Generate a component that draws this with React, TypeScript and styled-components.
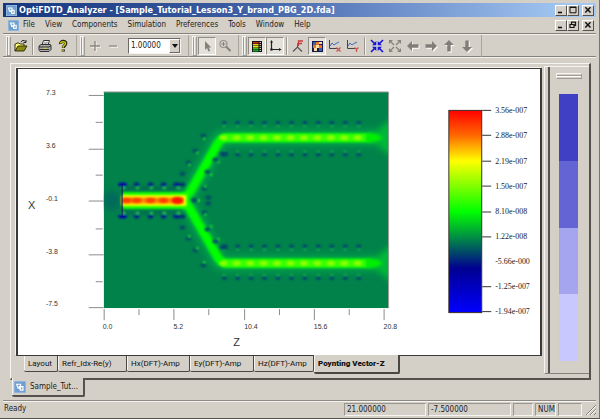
import React from "react";
import styled, { createGlobalStyle, css } from "styled-components";

const face = "#d4d0c8";
const shade = "#85827c";
const dark = "#3c3a38";
const ui = `"DejaVu Sans Condensed", "DejaVu Sans", sans-serif`;

const GlobalStyle = createGlobalStyle`
  *, *::before, *::after { box-sizing: border-box; }
  html, body, #root { height: 100%; margin: 0; }
  body { background: ${face}; font-family: ${ui}; font-size: 8px; line-height: 12px; color: #222; }
  button, input, select { font: inherit; color: inherit; margin: 0; padding: 0; border-radius: 0; }
  svg { display: block; }
`;

const Window = styled.div`
  display: flex;
  flex-direction: column;
  height: 100vh;
  padding: 3px 3px 1px;
  background: ${face};
  border-right: 1px solid #77746e;
  border-bottom: 1px solid #55524d;
`;

const TitleBar = styled.header`
  display: flex;
  align-items: center;
  height: 14px;
  flex: none;
  padding: 0 2px 0 3px;
  gap: 2px;
  background: linear-gradient(90deg, #16367e 0%, #3a5b9f 38%, #6d8fcb 66%, #a4c8f2 96%);
`;

const TitleText = styled.h1`
  flex: 1;
  margin: 0;
  font: bold 9px/14px ${ui};
  color: #fff;
  white-space: nowrap;
  overflow: hidden;
`;

const MenuBar = styled.nav`
  display: flex;
  align-items: center;
  height: 17px;
  flex: none;
  padding: 0 2px 0 5px;
  border-bottom: 1px solid ${shade};
`;

const MenuList = styled.div`
  display: flex;
  flex: 1;
  gap: 10px;
  padding-left: 4px;
`;

const MenuItem = styled.button`
  border: 0;
  background: none;
  line-height: 12px;
`;

const Captions = styled.div`
  display: flex;
`;

const CaptionButton = styled.button<{ $apart?: boolean }>`
  width: 12px;
  height: 11px;
  display: grid;
  place-items: center;
  background: ${face};
  border: 1px solid;
  border-color: #fff #55524d #55524d #fff;
  margin-left: ${(p) => (p.$apart ? "3px" : "0")};
`;

const ToolBar = styled.div`
  display: flex;
  align-items: center;
  height: 23px;
  flex: none;
  padding-left: 3px;
  border-top: 1px solid #f3f1ec;
  border-bottom: 1px solid ${shade};
`;

const Band = styled.div<{ $end: number }>`
  display: flex;
  align-items: center;
  height: 22px;
  padding-right: ${(p) => p.$end}px;
  border-right: 1px solid #aaa69e;
  margin-right: 3px;
`;

const Grip = styled.span`
  width: 5px;
  height: 20px;
  margin-right: 1px;
  border: 1px solid;
  border-color: #f6f4f0 #a19d95 #a19d95 #f6f4f0;
  background: linear-gradient(90deg, #a19d95 0 1px, #f6f4f0 1px 2px, ${face} 2px);
`;

const ToolButton = styled.button<{ $on?: boolean }>`
  width: 18px;
  height: 18px;
  display: grid;
  place-items: center;
  border: 1px solid transparent;
  background: none;
  ${(p) =>
    p.$on &&
    css`
      background: #e4e1db;
      border-color: #8f8c86 #fff #fff #8f8c86;
    `}
`;

const Divider = styled.span`
  width: 2px;
  height: 18px;
  margin: 0 2px;
  border-left: 1px solid #9b9790;
  border-right: 1px solid #f3f1ec;
`;

const Combo = styled.label`
  position: relative;
  display: flex;
  width: 53px;
  height: 16px;
  margin-left: 6px;
  border: 1px solid;
  border-color: #6c6964 #f6f4f0 #f6f4f0 #6c6964;
  background: #fff;
`;

const ComboSelect = styled.select`
  appearance: none;
  flex: 1;
  width: 100%;
  border: 0;
  padding-left: 2px;
  background: transparent;
  line-height: 14px;
`;

const ComboArrow = styled.span`
  position: absolute;
  right: 0;
  top: 0;
  bottom: 0;
  width: 11px;
  display: grid;
  place-items: center;
  background: ${face};
  border: 1px solid;
  border-color: #fff #6c6964 #6c6964 #fff;
  pointer-events: none;
`;

const Workspace = styled.main`
  display: flex;
  flex-direction: column;
  flex: 1;
  min-height: 0;
  padding: 6px 5px 0 7px;
  box-shadow: inset 0 1px #f3f1ec;
`;

const Frame = styled.section`
  display: flex;
  flex: 1;
  min-height: 0;
  border: 1px solid #f6f4f0;
  border-right: 2px solid #55524d;
  border-bottom: 2px solid #55524d;
`;

const PlotColumn = styled.div`
  display: flex;
  flex-direction: column;
  flex: 1;
  min-width: 0;
  padding: 4px 0 4px 5px;
`;

const PlotPane = styled.div`
  flex: 1;
  min-height: 0;
  background: #fff;
  border: 2px solid ${dark};
  border-top-width: 1px;
  border-bottom-width: 1px;
  box-shadow: -1px -1px #f6f4f0;
  & > svg { width: 100%; height: 100%; }
`;

const SheetTabs = styled.div`
  display: flex;
  align-items: flex-start;
  flex: none;
  height: 18px;
  padding-left: 8px;
`;

const SheetTab = styled.button<{ $w: number; $active?: boolean }>`
  width: ${(p) => p.$w}px;
  height: ${(p) => (p.$active ? "19px" : "16px")};
  margin-top: ${(p) => (p.$active ? "-1px" : "0")};
  padding-left: 4px;
  text-align: left;
  white-space: nowrap;
  font-family: Roboto, sans-serif;
  font-size: 8px;
  line-height: 14px;
  font-weight: ${(p) => (p.$active ? 900 : 400)};
  background: ${face};
  border: solid #4a4743;
  border-width: 0 1px 1px 0;
  border-right-width: ${(p) => (p.$active ? "2px" : "1px")};
  border-bottom-width: ${(p) => (p.$active ? "2px" : "1px")};
  border-radius: 0 0 2px 2px;
  box-shadow: inset 1px 0 #f6f4f0;
  color: #111;
`;

const Palette = styled.aside`
  display: flex;
  flex-direction: column;
  flex: none;
  width: 45px;
  margin: 2px 0 4px 2px;
  padding: 6px 7px 12px 8px;
  border-left: 1px solid #f6f4f0;
  box-shadow: inset 3px 0 ${face}, inset 5px 0 #55524d;
  border-top: 1px solid #f6f4f0;
  border-bottom: 1px solid #85827c;
`;

const PaletteGrip = styled.span`
  height: 6px;
  margin: 0 0 15px 3px;
  border: 1px solid;
  border-color: #f6f4f0 #a19d95 #a19d95 #f6f4f0;
  background: linear-gradient(${face} 0 1px, #a19d95 1px 2px, #fff 2px 3px, ${face} 3px);
`;

const Swatches = styled.div`
  display: flex;
  flex-direction: column;
  flex: 1;
  margin: 0 4px 0 6px;
`;

const Swatch = styled.span<{ $color: string }>`
  flex: 1;
  background: ${(p) => p.$color};
`;

const DocTabs = styled.div`
  display: flex;
  flex: none;
  height: 20px;
  padding-left: 2px;
`;

const DocTab = styled.button`
  display: flex;
  align-items: center;
  gap: 4px;
  width: 73px;
  height: 19px;
  margin-top: -2px;
  padding-left: 2px;
  background: ${face};
  border: solid #55524d;
  border-width: 0 2px 2px 0;
  border-radius: 0 0 2px 2px;
  box-shadow: inset 1px 0 #f6f4f0;
`;

const StatusBar = styled.footer`
  display: flex;
  align-items: center;
  flex: none;
  height: 17px;
  gap: 2px;
  padding: 1px 0 1px 1px;
  border-top: 1px solid #8d8a84;
  box-shadow: inset 0 1px #f6f4f0;
`;

const StatusText = styled.span`
  flex: 1;
`;

const StatusCell = styled.span<{ $w: number }>`
  width: ${(p) => p.$w}px;
  height: 13px;
  padding-left: 2px;
  line-height: 12px;
  border: 1px solid;
  border-color: #98958e #f6f4f0 #f6f4f0 #98958e;
`;

const AppIcon = ({ size = 11 }: { size?: number }) => (
  <svg width={size} height={size} viewBox="0 0 11 11" aria-hidden="true">
    <rect width="11" height="11" fill="#6f9fd0" />
    <rect width="11" height="11" fill="none" stroke="#a9c7e4" />
    <path d="M2.5 3h3.5v3.5H3.8zM5 5.2h3.2v3.2H5.8z" fill="none" stroke="#fff" strokeWidth="1.1" />
  </svg>
);

const Stroke = ({ d, w = 1.3, color = "#111" }: { d: string; w?: number; color?: string }) => (
  <svg width="8" height="8" viewBox="0 0 8 8" aria-hidden="true">
    <path d={d} fill="none" stroke={color} strokeWidth={w} />
  </svg>
);

const CaptionSet = ({ restore }: { restore?: boolean }) => (
  <Captions>
    <CaptionButton aria-label="Minimize"><Stroke d="M1 6.5h4" w={1.6} /></CaptionButton>
    <CaptionButton aria-label={restore ? "Restore" : "Maximize"}>
      {restore ? <Stroke d="M2.5 3V1h4v3.5H5M1 3.5h4v3H1zM1 3.5h4M2.5 1.2h4" w={1.2} /> : <Stroke d="M.8 1h6.4M1 .8v6h6v-6M1 1.5h6" w={1} />}
    </CaptionButton>
    <CaptionButton $apart aria-label="Close"><Stroke d="M1.3 1.2l5.2 5.4M6.5 1.2L1.3 6.6" w={1.4} /></CaptionButton>
  </Captions>
);

const Icon = ({ children }: { children: React.ReactNode }) => (
  <svg width="14" height="14" viewBox="0 0 14 14" fill="none" aria-hidden="true">{children}</svg>
);

const OpenIcon = () => (
  <Icon>
    <path d="M1 12V5h1l1-1h2l1 1h4v2" fill="#ffff70" stroke="#33330c" />
    <path d="M1 12l3-5h9l-3 5z" fill="#8b8b10" stroke="#33330c" />
    <path d="M7 3c1-2 3-2 4.500-.5M12 1v2.500H9.500" stroke="#222" />
  </Icon>
);
const PrintIcon = () => (
  <Icon>
    <path d="M4 6l1.500-4.500h6L10 6z" fill="#fff" stroke="#333" />
    <path d="M6 3.300h4M5.500 4.700h4" stroke="#777" strokeWidth=".7" />
    <path d="M1 7l2-1.500h9.500L13 7v3.500L11 12.500H2L1 11z" fill="#aaa" stroke="#333" />
    <path d="M1 8h10l2-1.500M2 10.500h9" stroke="#333" />
    <path d="M6 9.300h2.500" stroke="#e2dd20" />
  </Icon>
);
const HelpIcon = () => (
  <Icon>
    <path d="M4.500 5C4.200 1.800 10 1.500 9.800 4.500 9.700 6.500 7.300 6.500 7.300 9M7.300 10.500v2" stroke="#26260a" strokeWidth="3.200" />
    <path d="M4.500 4.500C4.500 2.200 9.600 2 9.500 4.500 9.400 6.300 7 6.500 7 8.700M7 10.700v1.300" stroke="#d0cc10" strokeWidth="1.400" />
  </Icon>
);
const PlusIcon = () => <Icon><path d="M8 3v10M3 8h10" stroke="#fff" /><path d="M7 2v10M2 7h10" stroke="#8a8781" strokeWidth="1.300" /></Icon>;
const MinusIcon = () => <Icon><path d="M4 8h8" stroke="#fff" /><path d="M3 7h8" stroke="#8a8781" strokeWidth="1.300" /></Icon>;
const CursorIcon = () => (
  <Icon><path d="M5 2v9l2-2 1.500 3.500 1.700-.8L8.700 8.500h2.600z" fill="#85827c" /></Icon>
);
const ZoomIcon = () => (
  <Icon>
    <circle cx="5.500" cy="5" r="3.500" stroke="#96938d" strokeWidth="1.200" />
    <path d="M5.500 3v4M3.500 5h4" stroke="#85827c" />
    <path d="M8 7.500l4.500 4.500" stroke="#85827c" strokeWidth="2" />
  </Icon>
);
const ColorBarIcon = () => (
  <Icon>
    <rect x="2" y="2" width="10" height="11" fill="#111" />
    {["#e02010", "#e8d010", "#d9ee10", "#30c020", "#10a830"].map((c, i) => <rect key={c} x="3" y={3 + i * 2} width="5.500" height="1.500" fill={c} />)}
    <path d="M9.500 3.500H11M9.500 5.500H11M9.500 7.500H11M9.500 9.500H11M9.500 11.500H11" stroke="#eee" strokeWidth=".8" />
  </Icon>
);
const AxesIcon = () => (
  <Icon>
    <path d="M3.500 3v7.500H12" stroke="#222" strokeWidth="1.200" />
    <path d="M3.500 1L5 3.500H2zM13.500 10.500l-2.500-1.500v3z" fill="#222" />
    <circle cx="3.500" cy="10.500" r="1.300" fill="#222" />
  </Icon>
);
const PointerFlagIcon = () => (
  <Icon>
    <path d="M1 12.500L5.500 8 10 12.500M5.500 8L6 4" stroke="#555" strokeWidth="1.200" />
    <path d="M6.500 7V2H11M6.500 4.500H10" stroke="#c83a3a" strokeWidth="1.300" />
  </Icon>
);
const FieldIcon = () => (
  <Icon>
    <rect x="2" y="2" width="11" height="11" fill="#17184c" />
    <path d="M3 3h3v3H3zM9 9h3v3H9z" fill="#3f62af" />
    <path d="M6 3h3v3H6zM3 6h3v3H3zM9 6h3v3H9z" fill="#e9762b" />
    <path d="M9 3h3v2H9zM6 6h3v3H6zM4 9h3v3H4z" fill="#ffe0a0" />
  </Icon>
);
const CutIcon = ({ y }: { y?: boolean }) => (
  <Icon>
    <path d="M1.500 1v8.500H10" stroke="#444" />
    <path d="M2 7l2-3 2 2 2-1.500L11 3" stroke="#4668b8" />
    <path d={y ? "M8.500 8.500l2 2 2-2M10.500 10.500V13" : "M8.500 8.500l4 4M12.500 8.500l-4 4"} stroke="#cf5050" strokeWidth="1.200" />
  </Icon>
);
const ShrinkIcon = () => (
  <Icon>
    <path d="M1 1l4.500 4.500M13 1L8.500 5.500M1 13l4.500-4.500M13 13L8.500 8.500" stroke="#1414d8" strokeWidth="1.600" />
    <path d="M6.300 2v4.300H2zM7.700 2v4.300H12zM6.300 12V7.700H2zM7.700 12V7.700H12z" fill="#1414d8" />
  </Icon>
);
const ExpandIcon = () => (
  <Icon>
    <path d="M3 3l3 3M11 3L8 6M3 11l3-3M11 11L8 8" stroke="#85827c" strokeWidth="1.300" />
    <path d="M1 1h4L1 5zM13 1H9l4 4zM1 13h4L1 9zM13 13H9l4-4z" fill="#85827c" />
  </Icon>
);
const ArrowIcon = ({ turn }: { turn: number }) => (
  <Icon>
    <path d="M1 7l5-5v3.300h6.500v3.400H6V12z" transform={`translate(1 1) rotate(${turn} 7 7)`} fill="#fff" />
    <path d="M1 7l5-5v3.300h6.500v3.400H6V12z" transform={`rotate(${turn} 7 7)`} fill="#817e78" />
  </Icon>
);

/* Chart geometry: the field spans x 86..372 and y 22..239, mirrored about the axis of the input guide. */
const AXIS = 131;
const mirror = (y: number) => 2 * AXIS - y;
const series = (from: number, step: number, n: number) => Array.from({ length: n }, (_, i) => from + step * i);

const armX = series(207, 13.5, 11);
const inputX = [105, 119, 133, 146, 160];
const sideDots: [number, number, boolean][] = [
  [186, 66, false], [187, 69, true], [178, 81, false], [180, 83, true], [171, 93, false], [172, 95, true], [165, 104, false],
  [205, 84, false], [201, 92, true], [198, 90, false], [194, 105, true], [190, 102, false], [187, 119, false], [188, 117, true],
  [208, 84, false], [181, 131, true], [177, 131, false], [191, 134, false],
];

const scaleRows: [string, number, boolean][] = [
  ["3.56e-007", 41, true], ["2.88e-007", 66, true], ["2.19e-007", 92, true], ["1.50e-007", 117, true], ["8.10e-008", 143, true],
  ["1.22e-008", 168, true], ["-5.66e-000", 193, false], ["-1.25e-007", 218, true], ["-1.94e-007", 243, true],
];

const Arm = ({ flip }: { flip?: boolean }) => (
  <g transform={flip ? `translate(0 ${2 * AXIS}) scale(1 -1)` : undefined}>
    <path d="M168 131L202 70Q204 68 210 68H358" stroke="#00a04a" strokeWidth="17" fill="none" filter="url(#soft3)" />
    <path d="M169 129L201 73Q204 68 210 68H356" stroke="#00ff00" strokeWidth="9" fill="none" filter="url(#soft2)" />
    <path d="M205 68H350" stroke="#38ff00" strokeWidth="7" filter="url(#soft1)" />
    {armX.map((x) => <ellipse key={x} cx={x - 1} cy="68" rx="4" ry="2.500" fill="#8cff00" filter="url(#soft1)" />)}
    <path d="M350 68L380 46V90z" fill="#00b838" filter="url(#soft3)" />
    <path d="M350 64H360L366 68 360 72H350z" fill="#00f000" filter="url(#soft2)" />
    {armX.map((x) => (
      <g key={x} filter="url(#soft1)">
        <ellipse cx={x} cy="53" rx="2.500" ry="1.500" fill="#003a78" />
        <ellipse cx={x} cy="56.500" rx="2" ry="1" fill="#1caa48" />
        <ellipse cx={x} cy="85" rx="2.500" ry="1.500" fill="#003a78" />
        <ellipse cx={x} cy="81.500" rx="2" ry="1" fill="#1caa48" />
      </g>
    ))}
    {sideDots.map(([x, y, lit]) => (
      <ellipse key={`${x}-${y}`} cx={x} cy={y} rx={lit ? 1.5 : 2.8} ry={lit ? 1.3 : 2} fill={lit ? "#20e030" : "#004868"} filter="url(#soft1)" />
    ))}
  </g>
);

const FieldChart = () => (
  <svg viewBox="0 0 524 285" role="img" aria-label="Poynting Vector-Z field distribution">
    <defs>
      <clipPath id="field"><rect x="86" y="22" width="286" height="217" /></clipPath>
      {[1, 1.7, 3].map((s, i) => (
        <filter key={s} id={`soft${i + 1}`} filterUnits="userSpaceOnUse" x="60" y="0" width="340" height="270"><feGaussianBlur stdDeviation={s} /></filter>
      ))}
      <linearGradient id="scale" x2="0" y2="1">
        <stop offset="0" stopColor="#ff0000" />
        <stop offset=".12" stopColor="#ff6400" />
        <stop offset=".25" stopColor="#ffff00" />
        <stop offset=".5" stopColor="#00ff00" />
        <stop offset=".64" stopColor="#00824a" />
        <stop offset=".78" stopColor="#000090" />
        <stop offset="1" stopColor="#0000ff" />
      </linearGradient>
    </defs>

    <g clipPath="url(#field)">
      <rect x="86" y="22" width="286" height="217" fill="#00824a" />
      <ellipse cx="94" cy="131" rx="9" ry="10" fill="#006a5c" filter="url(#soft3)" />
      <path d="M104 119H168M104 143H168" stroke="#007050" strokeWidth="5" filter="url(#soft2)" />
      <Arm />
      <Arm flip />
      <path d="M105 131H172" stroke="#10ff00" strokeWidth="17" filter="url(#soft1)" />
      <path d="M104 131H169" stroke="#f4ff00" strokeWidth="11" filter="url(#soft1)" />
      <path d="M104 131H166" stroke="#ff8a00" strokeWidth="6" filter="url(#soft1)" />
      {[109, 119, 133, 146, 160].map((x, i) => (
        <ellipse key={x} cx={x} cy="131" rx={i === 4 ? 6 : 5} ry={i === 4 ? 3.5 : 2.5} fill={i === 4 ? "#ff1800" : "#ff3c00"} filter="url(#soft1)" />
      ))}
      {[115, mirror(115)].map((y) => (
        <g key={y} filter="url(#soft1)">
          {inputX.map((x, i) => (
            <ellipse key={x} cx={x} cy={y} rx={i === 0 || i === 4 ? 4.5 : 2.8} ry="2" fill={i === 0 ? "#0000b4" : "#001c90"} />
          ))}
          <ellipse cx="165" cy={y} rx="3" ry="2" fill="#003070" />
          {inputX.map((x) => (
            <ellipse key={x} cx={x + 1} cy={y < AXIS ? y + 3.5 : y - 3.5} rx="2" ry="1.200" fill="#30d040" />
          ))}
        </g>
      ))}
      <path d="M104.500 115V147" stroke="#101060" />
    </g>
    <path d="M86 22H372V239" stroke="#9a9a9a" fill="none" />

    <g stroke="#8c8c8c">
      {[25.5, 79.5, 131.5, 185.5, 238.5].map((y) => <path key={y} d={`M71 ${y}h15`} />)}
      {[52.5, 105.5, 159.5, 212.5].map((y) => <path key={y} d={`M78 ${y}h7`} />)}
      {[86.5, 156.5, 227.5, 297.5, 367.5].map((x) => <path key={x} d={`M${x} 240v11`} />)}
      {[121.5, 191.5, 262.5, 332.5].map((x) => <path key={x} d={`M${x} 240v6`} />)}
    </g>
    <g fontFamily="Liberation Sans, Arial, sans-serif" fontSize="7" fill="#333">
      {([["7.3", 25], ["3.6", 78], ["-0.1", 131], ["-3.8", 185], ["-7.5", 237]] as [string, number][]).map(([t, y]) => <text key={t} x="28" y={y}>{t}</text>)}
      {([["0.0", 85], ["5.2", 156], ["10.4", 227], ["15.6", 297], ["20.8", 367]] as [string, number][]).map(([t, x]) => <text key={t} x={x} y="260">{t}</text>)}
      <text x="10" y="140" fontSize="11">X</text>
      <text x="216" y="277" fontSize="11">Z</text>
    </g>

    <rect x="432.500" y="40.500" width="33" height="203" fill="url(#scale)" stroke="#3a3028" />
    <g fontFamily="Liberation Serif, Times New Roman, serif" fontSize="8" fill="#222">
      {scaleRows.map(([t, y, tick]) => (
        <g key={t}>
          {tick && <path d={`M466 ${y - 0.5}h9`} stroke="#333" />}
          <text x="479" y={y + 2}>{t}</text>
        </g>
      ))}
    </g>
  </svg>
);

const menus = ["File", "View", "Components", "Simulation", "Preferences", "Tools", "Window", "Help"];
const sheets: [string, number][] = [
  ["Layout", 34], ["Refr_Idx-Re(y)", 69], ["Hx(DFT)-Amp", 63], ["Ey(DFT)-Amp", 64], ["Hz(DFT)-Amp", 60], ["Poynting Vector-Z", 86],
];

export default function App() {
  return (
    <>
      <GlobalStyle />
      <Window>
        <TitleBar>
          <AppIcon />
          <TitleText>OptiFDTD_Analyzer - [Sample_Tutorial_Lesson3_Y_brand_PBG_2D.fda]</TitleText>
          <CaptionSet />
        </TitleBar>
        <MenuBar>
          <AppIcon />
          <MenuList>{menus.map((m) => <MenuItem key={m}>{m}</MenuItem>)}</MenuList>
          <CaptionSet restore />
        </MenuBar>
        <ToolBar role="toolbar">
          <Band $end={4}>
            <Grip />
            <ToolButton aria-label="Open"><OpenIcon /></ToolButton>
            <Divider />
            <ToolButton aria-label="Print"><PrintIcon /></ToolButton>
            <ToolButton aria-label="Help"><HelpIcon /></ToolButton>
          </Band>
          <Band $end={7}>
            <Grip />
            <ToolButton aria-label="Increase"><PlusIcon /></ToolButton>
            <ToolButton aria-label="Decrease"><MinusIcon /></ToolButton>
            <Combo>
              <ComboSelect aria-label="Scale" defaultValue="1.00000"><option>1.00000</option></ComboSelect>
              <ComboArrow><svg width="6" height="4" viewBox="0 0 6 4"><path d="M0 0h6L3 4z" fill="#111" /></svg></ComboArrow>
            </Combo>
          </Band>
          <Band $end={4}>
            <Grip />
            <ToolButton $on aria-label="Select"><CursorIcon /></ToolButton>
            <ToolButton aria-label="Zoom"><ZoomIcon /></ToolButton>
          </Band>
          <Band $end={5}>
            <Grip />
            <ToolButton $on aria-label="Color bar"><ColorBarIcon /></ToolButton>
            <ToolButton $on aria-label="Axes"><AxesIcon /></ToolButton>
            <Divider />
            <ToolButton aria-label="Pointer flag"><PointerFlagIcon /></ToolButton>
            <ToolButton $on aria-label="Image map"><FieldIcon /></ToolButton>
            <ToolButton aria-label="X cut"><CutIcon /></ToolButton>
            <ToolButton aria-label="Y cut"><CutIcon y /></ToolButton>
            <Divider />
            <ToolButton aria-label="Shrink"><ShrinkIcon /></ToolButton>
            <ToolButton aria-label="Expand"><ExpandIcon /></ToolButton>
            <ToolButton aria-label="Left"><ArrowIcon turn={0} /></ToolButton>
            <ToolButton aria-label="Right"><ArrowIcon turn={180} /></ToolButton>
            <ToolButton aria-label="Up"><ArrowIcon turn={90} /></ToolButton>
            <ToolButton aria-label="Down"><ArrowIcon turn={270} /></ToolButton>
          </Band>
        </ToolBar>
        <Workspace>
          <Frame>
            <PlotColumn>
              <PlotPane><FieldChart /></PlotPane>
              <SheetTabs>
                {sheets.map(([name, w], i) => <SheetTab key={name} $w={w} $active={i === 5}>{name}</SheetTab>)}
              </SheetTabs>
            </PlotColumn>
            <Palette>
              <PaletteGrip />
              <Swatches>
                {["#4040c4", "#6464d4", "#a5a5ef", "#c8c8ff"].map((c) => <Swatch key={c} $color={c} />)}
              </Swatches>
            </Palette>
          </Frame>
          <DocTabs>
            <DocTab><AppIcon size={12} />Sample_Tut...</DocTab>
          </DocTabs>
        </Workspace>
        <StatusBar>
          <StatusText>Ready</StatusText>
          <StatusCell $w={82}>21.000000</StatusCell>
          <StatusCell $w={83}>-7.500000</StatusCell>
          <StatusCell $w={20} />
          <StatusCell $w={21}>NUM</StatusCell>
          <StatusCell $w={24} />
          <svg width="12" height="12" viewBox="0 0 12 12" aria-hidden="true">
            <path d="M2 12L12 2M6 12l6-6M10 12l2-2" stroke="#85827c" />
            <path d="M3 12l9-9M7 12l5-5" stroke="#fff" />
          </svg>
        </StatusBar>
      </Window>
    </>
  );
}
